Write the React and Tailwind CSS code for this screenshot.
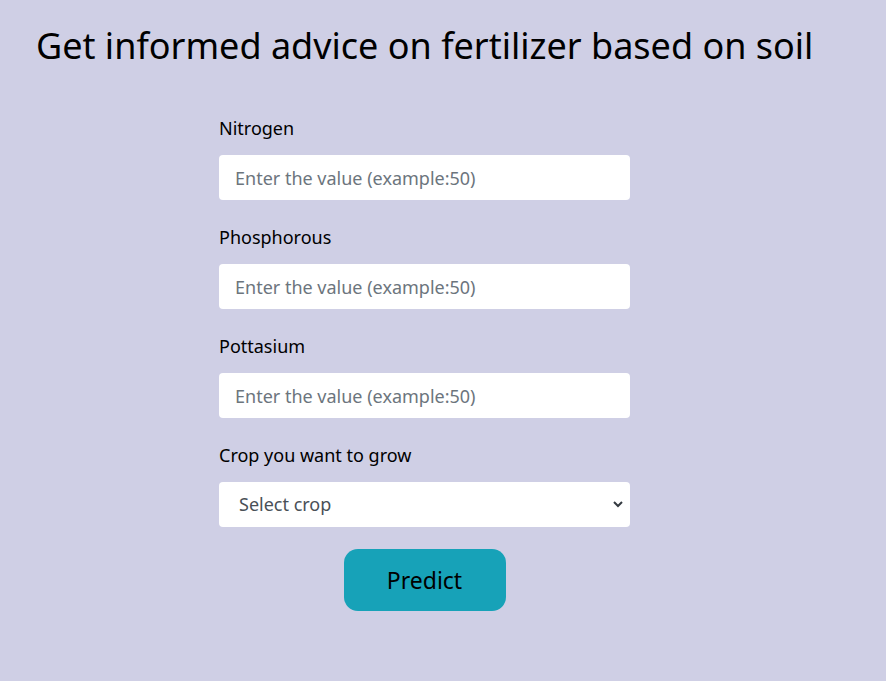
export default function App() {
  const fields = ["Nitrogen", "Phosphorous", "Pottasium"];
  return (
    <div className="min-h-[681px] bg-[#cfcfe5] font-['Noto_Sans',sans-serif] text-black">
      <h1 className="pl-[36px] pt-[22px] text-[36px] leading-[48px]">
        Get informed advice on fertilizer based on soil
      </h1>
      <form className="ml-[219px] mt-[45px] w-[411px]">
        {fields.map((f) => (
          <div key={f} className="mb-[24px]">
            <label className="block text-[18px] leading-[26px]">{f}</label>
            <input
              className="mt-[14px] h-[45px] w-full rounded-[4px] bg-white px-[16px] text-[18px] outline-none placeholder:text-[#6c757d]"
              placeholder="Enter the value (example:50)"
            />
          </div>
        ))}
        <div>
          <label className="block text-[18px] leading-[26px]">Crop you want to grow</label>
          <div className="relative mt-[14px]">
            <select className="h-[45px] w-full appearance-none rounded-[4px] bg-white px-[20px] text-[18px] text-[#495057] outline-none">
              <option>Select crop</option>
            </select>
            <svg
              className="pointer-events-none absolute right-[6px] top-[18px]"
              width="12"
              height="9"
              viewBox="0 0 12 9"
            >
              <path d="M2 2l4 4 4-4" fill="none" stroke="#343a40" strokeWidth="2" />
            </svg>
          </div>
        </div>
        <div className="mt-[22px] flex justify-center">
          <button
            type="button"
            className="h-[62px] w-[162px] rounded-[14px] bg-[#17a2b8] text-[23px]"
          >
            Predict
          </button>
        </div>
      </form>
    </div>
  );
}
